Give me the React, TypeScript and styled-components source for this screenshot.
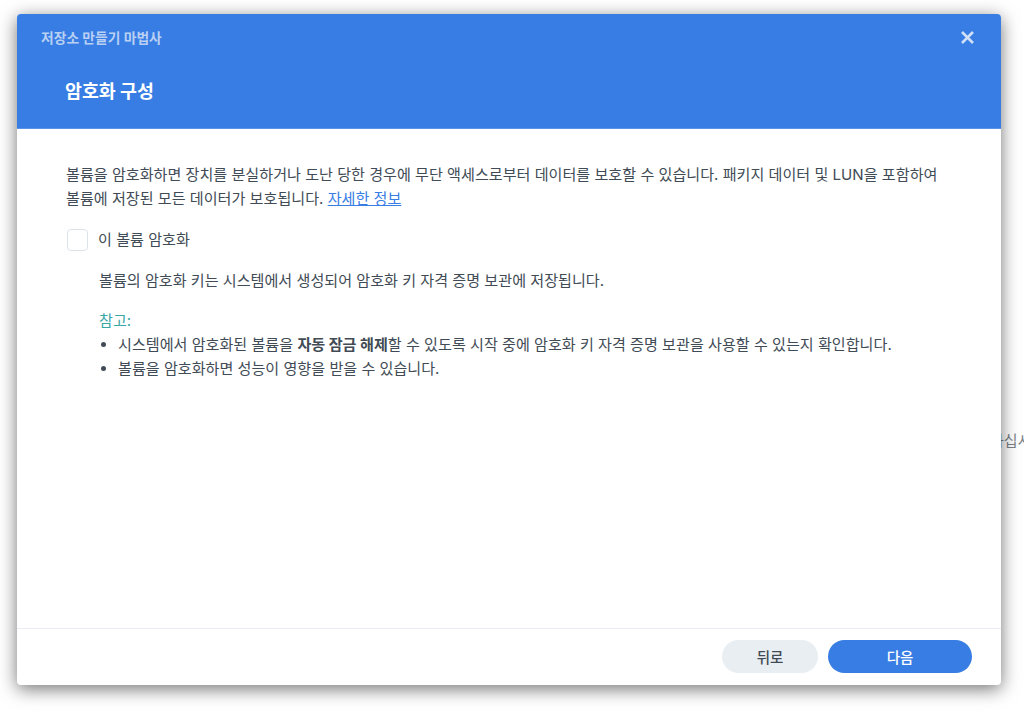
import styled, { createGlobalStyle } from 'styled-components';

const GlobalStyle = createGlobalStyle`
  html, body {
    margin: 0;
    height: 100%;
    background: #fff;
  }
  body {
    font-family: Inter, 'Noto Sans CJK KR', sans-serif;
    color: #414b55;
    overflow: hidden;
  }
`;

const App = () => {
  return (
    <>
      <GlobalStyle />
      <Page>
        <BehindText>하십시</BehindText>
        <Dialog>
          <Header>
            <TopRow>
              <WizardName>저장소 만들기 마법사</WizardName>
              <CloseButton aria-label="닫기">
                <svg width="13" height="13" viewBox="0 0 13 13" fill="none">
                  <path d="M1 1l11 11M12 1L1 12" stroke="#cfe0f8" strokeWidth="2.6" />
                </svg>
              </CloseButton>
            </TopRow>
            <StepTitle>암호화 구성</StepTitle>
          </Header>
          <Body>
            <Intro>
              볼륨을 암호화하면 장치를 분실하거나 도난 당한 경우에 무단 액세스로부터 데이터를 보호할 수 있습니다. 패키지 데이터 및 LUN을 포함하여
              <br />
              볼륨에 저장된 모든 데이터가 보호됩니다. <MoreLink href="#">자세한 정보</MoreLink>
            </Intro>
            <CheckRow>
              <CheckBox type="checkbox" />
              <span>이 볼륨 암호화</span>
            </CheckRow>
            <Details>
              <KeyNote>볼륨의 암호화 키는 시스템에서 생성되어 암호화 키 자격 증명 보관에 저장됩니다.</KeyNote>
              <NoteLabel>참고:</NoteLabel>
              <NoteList>
                <li>
                  시스템에서 암호화된 볼륨을 <strong>자동 잠금 해제</strong>할 수 있도록 시작 중에 암호화 키 자격 증명 보관을 사용할 수 있는지 확인합니다.
                </li>
                <li>볼륨을 암호화하면 성능이 영향을 받을 수 있습니다.</li>
              </NoteList>
            </Details>
          </Body>
          <Footer>
            <BackButton>뒤로</BackButton>
            <NextButton>다음</NextButton>
          </Footer>
        </Dialog>
      </Page>
    </>
  );
};

const Page = styled.div`
  position: relative;
  width: 1024px;
  height: 712px;
  box-sizing: border-box;
  padding: 14px 23px 27px 17px;
`;

const BehindText = styled.div`
  position: absolute;
  left: 990px;
  top: 431px;
  font-size: 15px;
  line-height: 20px;
  color: #7b838b;
  white-space: nowrap;
`;

const Dialog = styled.div`
  position: relative;
  display: flex;
  flex-direction: column;
  height: 100%;
  background: #fff;
  border-radius: 4px;
  overflow: hidden;
  box-shadow: 0 4px 18px rgba(0, 0, 0, 0.55);
`;

const Header = styled.div`
  height: 115px;
  flex: none;
  box-sizing: border-box;
  background: #377de4;
  border-bottom: 1px solid #5a94ea;
  padding: 13px 27px 0 24px;
`;

const TopRow = styled.div`
  display: flex;
  align-items: center;
  justify-content: space-between;
  height: 20px;
`;

const WizardName = styled.div`
  font-size: 13.8px;
  font-weight: 700;
  color: #b9d0f3;
`;

const CloseButton = styled.div`
  display: flex;
`;

const StepTitle = styled.h1`
  margin: 31px 0 0 24px;
  font-size: 18.4px;
  line-height: 26px;
  font-weight: 700;
  color: #fff;
`;

const Body = styled.div`
  flex: 1;
  box-sizing: border-box;
  padding: 34px 49px 0 49px;
  font-size: 15.1px;
  line-height: 24px;
`;

const Intro = styled.p`
  margin: 0;
  white-space: nowrap;
`;

const MoreLink = styled.a`
  color: #377de4;
  text-decoration: underline;
`;

const CheckRow = styled.label`
  display: flex;
  align-items: center;
  gap: 10px;
  margin: 17px 0 0 1px;
`;

const CheckBox = styled.input`
  appearance: none;
  width: 21px;
  height: 22px;
  margin: 0;
  box-sizing: border-box;
  background: #fff;
  border: 1px solid #dde3ea;
  border-radius: 4px;
`;

const Details = styled.div`
  margin-left: 33px;
`;

const KeyNote = styled.p`
  margin: 17px 0 0;
`;

const NoteLabel = styled.div`
  margin-top: 16px;
  color: #3ba6a6;
`;

const NoteList = styled.ul`
  margin: 0;
  padding: 0 0 0 19px;
  white-space: nowrap;

  strong {
    font-weight: 700;
  }
`;

const Footer = styled.div`
  flex: none;
  height: 57px;
  box-sizing: border-box;
  border-top: 1px solid #e9edf2;
  display: flex;
  align-items: center;
  justify-content: flex-end;
  gap: 10px;
  padding: 0 29px 2px 0;
`;

const PillButton = styled.button`
  height: 33px;
  border: 0;
  border-radius: 17px;
  font-family: inherit;
  font-size: 14.5px;
  font-weight: 500;
  padding: 0;
`;

const BackButton = styled(PillButton)`
  width: 96px;
  background: #e9eef2;
  color: #414b55;
`;

const NextButton = styled(PillButton)`
  width: 144px;
  background: #377de4;
  color: #fff;
`;

export default App;
